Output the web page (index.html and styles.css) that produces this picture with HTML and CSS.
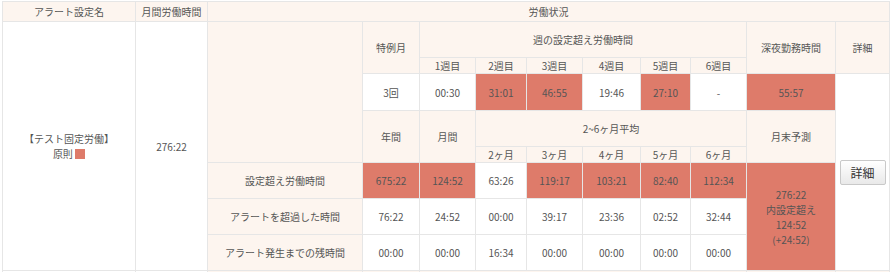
FILE: index.html
```html
<!DOCTYPE html>
<html lang="ja">
<head>
<meta charset="utf-8">
<title>アラート設定</title>
<link rel="stylesheet" href="styles.css">
</head>
<body>
<table class="alert-table">
  <colgroup>
    <col class="w-name"><col class="w-month"><col class="w-label">
    <col class="w-57"><col class="w-56"><col class="w-51"><col class="w-56">
    <col class="w-58"><col class="w-50"><col class="w-56">
    <col class="w-night"><col class="w-detail">
  </colgroup>
  <tr class="r-head">
    <th>アラート設定名</th>
    <th>月間労働時間</th>
    <th colspan="10">労働状況</th>
  </tr>
  <tr class="r-tall">
    <td rowspan="8" class="cell-name">【テスト固定労働】<br>原則 <span class="swatch"></span></td>
    <td rowspan="8">276:22</td>
    <th rowspan="5"></th>
    <th rowspan="2">特例月</th>
    <th colspan="6">週の設定超え労働時間</th>
    <th rowspan="2">深夜勤務時間</th>
    <th rowspan="2">詳細</th>
  </tr>
  <tr class="r-sub">
    <th>1週目</th><th>2週目</th><th>3週目</th><th>4週目</th><th>5週目</th><th>6週目</th>
  </tr>
  <tr class="r-data">
    <td>3回</td>
    <td>00:30</td>
    <td class="over">31:01</td>
    <td class="over">46:55</td>
    <td>19:46</td>
    <td class="over">27:10</td>
    <td>-</td>
    <td class="over">55:57</td>
    <td rowspan="6" class="cell-btn"><button class="btn-detail" type="button">詳細</button></td>
  </tr>
  <tr class="r-tall">
    <th rowspan="2">年間</th>
    <th rowspan="2">月間</th>
    <th colspan="5">2~6ヶ月平均</th>
    <th rowspan="2">月末予測</th>
  </tr>
  <tr class="r-sub">
    <th>2ヶ月</th><th>3ヶ月</th><th>4ヶ月</th><th>5ヶ月</th><th>6ヶ月</th>
  </tr>
  <tr class="r-tall">
    <th>設定超え労働時間</th>
    <td class="over">675:22</td>
    <td class="over">124:52</td>
    <td>63:26</td>
    <td class="over">119:17</td>
    <td class="over">103:21</td>
    <td class="over">82:40</td>
    <td class="over">112:34</td>
    <td rowspan="3" class="over">276:22<br>内設定超え<br>124:52<br>(+24:52)</td>
  </tr>
  <tr class="r-tall">
    <th>アラートを超過した時間</th>
    <td>76:22</td><td>24:52</td><td>00:00</td><td>39:17</td><td>23:36</td><td>02:52</td><td>32:44</td>
  </tr>
  <tr class="r-tall">
    <th>アラート発生までの残時間</th>
    <td>00:00</td><td>00:00</td><td>16:34</td><td>00:00</td><td>00:00</td><td>00:00</td><td>00:00</td>
  </tr>
  <tr class="r-tall">
    <td></td><td></td><th></th><th></th><th colspan="6"></th><th></th><th></th>
  </tr>
</table>
</body>
</html>
```
FILE: styles.css
```css
html, body {
  background: #ffffff;
}
body {
  margin: 1px 0 0 2px;
  font-family: "Noto Sans CJK JP", "Noto Sans", sans-serif;
  font-size: 10px;
  line-height: 15px;
  color: #555555;
  overflow: hidden;
}
.alert-table {
  border-collapse: collapse;
  table-layout: fixed;
  width: 888px;
}
.alert-table th,
.alert-table td {
  border: 1px solid #e6e6e6;
  padding: 0;
  text-align: center;
  vertical-align: middle;
  font-weight: normal;
  white-space: nowrap;
}
.alert-table th {
  background: #fdf5ef;
}
.alert-table td {
  background: #ffffff;
}
.alert-table td.over {
  background: #de7b6a;
}
.w-name { width: 133px; }
.w-month { width: 72px; }
.w-label { width: 155px; }
.w-57 { width: 57px; }
.w-56 { width: 56px; }
.w-51 { width: 51px; }
.w-58 { width: 58px; }
.w-50 { width: 50px; }
.w-night { width: 89px; }
.w-detail { width: 54px; }

.r-head { height: 20px; }
.r-tall { height: 36px; }
.r-sub { height: 16px; }
.r-data { height: 37px; }

.swatch {
  display: inline-block;
  width: 10px;
  height: 10px;
  background: #de7b6a;
  vertical-align: -1px;
}
.btn-detail {
  width: 46px;
  height: 25px;
  padding: 0;
  font-family: "Noto Sans CJK JP", sans-serif;
  font-size: 12px;
  color: #333333;
  border: 1px solid #c9c9c9;
  border-radius: 2px;
  background: linear-gradient(#ffffff, #e9e9e9);
}
```
